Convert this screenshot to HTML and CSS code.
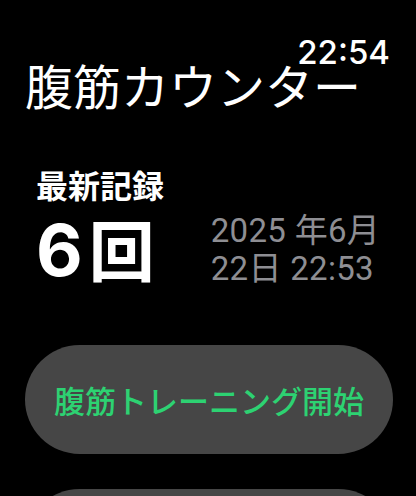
FILE: index.html
```html
<!DOCTYPE html>
<html lang="ja">
  <head>
    <meta charset="UTF-8" />
    <meta name="viewport" content="width=device-width, initial-scale=1.0" />
    <title>腹筋カウンター</title>
    <link rel="stylesheet" href="styles.css">
  </head>
  <body>
    <div class="screen">
      <div class="status-time">22:54</div>
      <h1 class="title">腹筋カウンター</h1>
      <section class="record">
        <div class="record-label">最新記録</div>
        <div class="record-row">
          <div class="count"><span class="count-num">6</span><span class="count-unit">回</span></div>
          <div class="record-date">2025 年6月<br>22日 22:53</div>
        </div>
      </section>
      <div class="actions">
        <button class="pill-btn start-btn">腹筋トレーニング開始</button>
        <button class="pill-btn" aria-label="履歴"></button>
      </div>
    </div>
  </body>
</html>
```

FILE: styles.css
```css
html, body {
  margin: 0;
  padding: 0;
  background: #000;
}
body {
  font-family: 'Noto Sans CJK JP', 'Inter', sans-serif;
  color: #fff;
}
.screen {
  width: 416px;
  height: 496px;
  overflow: hidden;
}

.status-time {
  padding: 36px 26px 0 0;
  text-align: right;
  font-family: 'Inter', sans-serif;
  font-size: 33px;
  font-weight: 500;
  line-height: 1;
}

.title {
  margin: -9px 0 0;
  padding-left: 25px;
  font-size: 48px;
  font-weight: 400;
  line-height: 1;
  white-space: nowrap;
}

.record {
  margin-top: 60px;
  padding-left: 36px;
}
.record-label {
  font-size: 32px;
  font-weight: 700;
  line-height: 1;
}
.record-row {
  display: flex;
  align-items: center;
  gap: 56px;
  margin-top: 12px;
}
.count {
  font-family: 'Inter', 'Noto Sans CJK JP', sans-serif;
  font-size: 72px;
  font-weight: 700;
  line-height: 1;
  white-space: nowrap;
}
.count-unit {
  margin-left: 6px;
  font-family: 'Noto Sans CJK JP', sans-serif;
  font-size: 66px;
}
.record-date {
  font-family: 'Roboto', 'Noto Sans CJK JP', sans-serif;
  font-size: 33px;
  line-height: 38px;
  letter-spacing: 0.3px;
  color: #8e8e93;
  white-space: nowrap;
}

.actions {
  display: flex;
  flex-direction: column;
  gap: 35px;
  margin-top: 57px;
  padding: 0 23px 0 25px;
}
.pill-btn {
  height: 109px;
  flex-shrink: 0;
  border: none;
  border-radius: 55px;
  background: #464646;
  color: #fff;
  font-family: 'Noto Sans CJK JP', sans-serif;
  font-size: 31px;
  font-weight: 500;
}
.start-btn {
  color: #2dd272;
}
```
